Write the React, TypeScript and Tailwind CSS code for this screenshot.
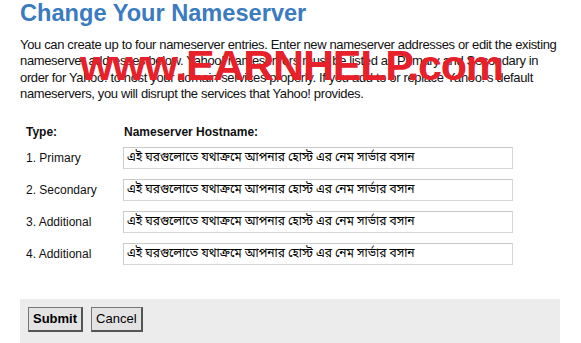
import React from "react";

const rows = ["1. Primary", "2. Secondary", "3. Additional", "4. Additional"];
const bn = "এই ঘরগুলোতে যথাক্রমে আপনার হোস্ট এর নেম সার্ভার বসান";

export default function App() {
  return (
    <div className="relative w-[581px] h-[343px] overflow-hidden bg-white text-[#111] font-['Liberation_Sans',Arial,sans-serif]">
      <div className="pl-[20px] pr-[10px]">
        <h1 className="pt-[0px] text-[23.6px] leading-[27px] font-bold text-[#3b7bbf]">Change Your Nameserver</h1>
        <p className="mt-[10px] w-[542px] text-[13px] leading-[16.4px] tracking-[-0.35px] text-[#111]">
          You can create up to four nameserver entries. Enter new nameserver addresses or edit the existing nameserver addresses below. Yahoo! nameservers must be listed as Primary and Secondary in order for Yahoo! to host your domain services properly. If you add to or replace Yahoo!'s default nameservers, you will disrupt the services that Yahoo! provides.
        </p>
        <div className="mt-[20px] flex text-[12px] font-bold">
          <div className="w-[98px] pl-[6px]">Type:</div>
          <div className="pl-[6px]">Nameserver Hostname:</div>
        </div>
        <div className="mt-[6px] flex flex-col gap-[10px]">
          {rows.map((r) => (
            <div key={r} className="flex items-center h-[22px]">
              <div className="w-[103px] pl-[6px] text-[12px]">{r}</div>
              <div className="w-[390px] h-[22px] border border-[#d7d7d7] border-t-[#c9c9c9] border-l-[#cccccc] flex items-center pl-[3px] text-[12px] text-black font-['Noto_Sans_Bengali','Noto_Sans',sans-serif] whitespace-nowrap overflow-hidden">
                {bn}
              </div>
            </div>
          ))}
        </div>
        <div className="mt-[34px] w-[540px] h-[60px] bg-[#ececec] flex items-start gap-[8px] pl-[8px] pt-[8px]">
          <button className="h-[25px] px-[4px] bg-[#e3e3e3] border border-[#555] border-t-[#777] border-l-[#777] border-b-2 border-r-2 text-[13px] font-bold text-black">Submit</button>
          <button className="h-[25px] px-[4px] bg-[#e3e3e3] border border-[#555] border-t-[#777] border-l-[#777] border-b-2 border-r-2 text-[13px] text-black">Cancel</button>
        </div>
      </div>
      <div className="absolute left-[80px] top-[40px] text-[43px] leading-[50px] tracking-[-1.2px] font-bold text-[#e8202a] whitespace-nowrap">www.EARNHELP.com</div>
    </div>
  );
}
